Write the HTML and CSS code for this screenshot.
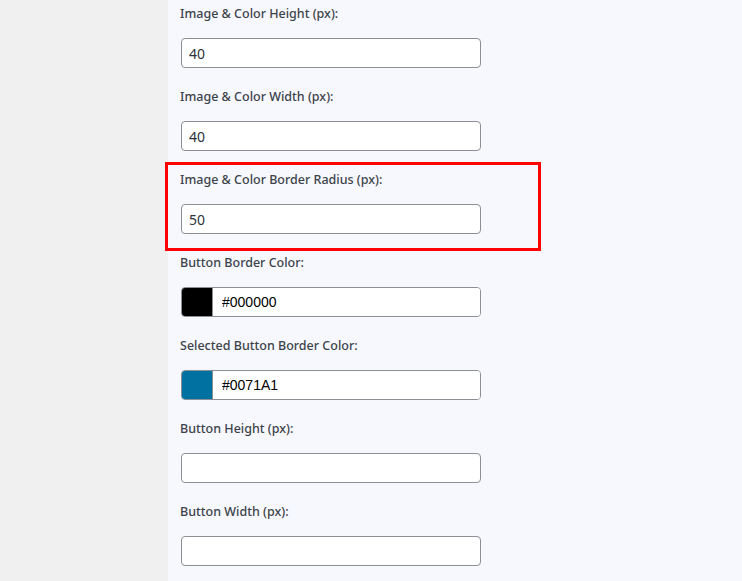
FILE: index.html
```html
<!DOCTYPE html>
<html lang="en">
<head>
  <meta charset="UTF-8">
  <meta name="viewport" content="width=device-width, initial-scale=1.0">
  <title>Swatch Settings</title>
  <link rel="stylesheet" href="styles.css">
</head>
<body>
  <div class="layout">
    <div class="sidebar"></div>

    <div class="settings">
      <div class="field">
        <label for="img-height">Image &amp; Color Height (px):</label>
        <input type="text" id="img-height" value="40">
      </div>

      <div class="field">
        <label for="img-width">Image &amp; Color Width (px):</label>
        <input type="text" id="img-width" value="40">
      </div>

      <div class="field highlight">
        <label for="img-radius">Image &amp; Color Border Radius (px):</label>
        <input type="text" id="img-radius" value="50">
      </div>

      <div class="field">
        <label for="btn-border">Button Border Color:</label>
        <div class="color-input">
          <span class="swatch swatch-black"></span>
          <input type="text" id="btn-border" value="#000000">
        </div>
      </div>

      <div class="field">
        <label for="btn-selected">Selected Button Border Color:</label>
        <div class="color-input">
          <span class="swatch swatch-blue"></span>
          <input type="text" id="btn-selected" value="#0071A1">
        </div>
      </div>

      <div class="field">
        <label for="btn-height">Button Height (px):</label>
        <input type="text" id="btn-height" value="">
      </div>

      <div class="field">
        <label for="btn-width">Button Width (px):</label>
        <input type="text" id="btn-width" value="">
      </div>
    </div>
  </div>
</body>
</html>
```

FILE: styles.css
```css
html, body {
  margin: 0;
  padding: 0;
  height: 100%;
}
body {
  font-family: "Noto Sans", "Open Sans", sans-serif;
  background-color: #f7f8fd;
  overflow: hidden;
}
.layout {
  display: flex;
  min-height: 100%;
}
.sidebar {
  width: 168px;
  flex-shrink: 0;
  background-color: #f0f0f1;
}
.settings {
  width: 370px;
  margin-top: -1px;
}
.field {
  padding: 6px 0 14px 12px;
}
.field label {
  display: block;
  font-size: 12.5px;
  font-weight: 500;
  line-height: 18px;
  color: #3c434a;
  margin-bottom: 15px;
}
.field input {
  box-sizing: border-box;
  width: 300px;
  height: 30px;
  padding: 0 7px;
  border: 1px solid #8c8f94;
  border-radius: 4px;
  background-color: #fff;
  font-family: "Noto Sans", sans-serif;
  font-size: 14px;
  color: #2c3338;
  outline: none;
}
.field > input,
.field > .color-input {
  margin-left: 1px;
}
.highlight {
  outline: 3px solid #ff0000;
}
.color-input {
  display: flex;
  box-sizing: border-box;
  width: 300px;
  height: 30px;
  border: 1px solid #8c8f94;
  border-radius: 4px;
  background-color: #fff;
  overflow: hidden;
}
.swatch {
  width: 30px;
  flex-shrink: 0;
  border-right: 1px solid #8c8f94;
}
.swatch-black {
  background-color: #000000;
}
.swatch-blue {
  background-color: #0071a1;
}
.color-input input {
  flex: 1;
  width: auto;
  height: 28px;
  border: none;
  border-radius: 0;
  padding: 0 9px;
  font-family: "Liberation Sans", Arial, sans-serif;
  font-size: 14px;
  color: #000;
}
```
